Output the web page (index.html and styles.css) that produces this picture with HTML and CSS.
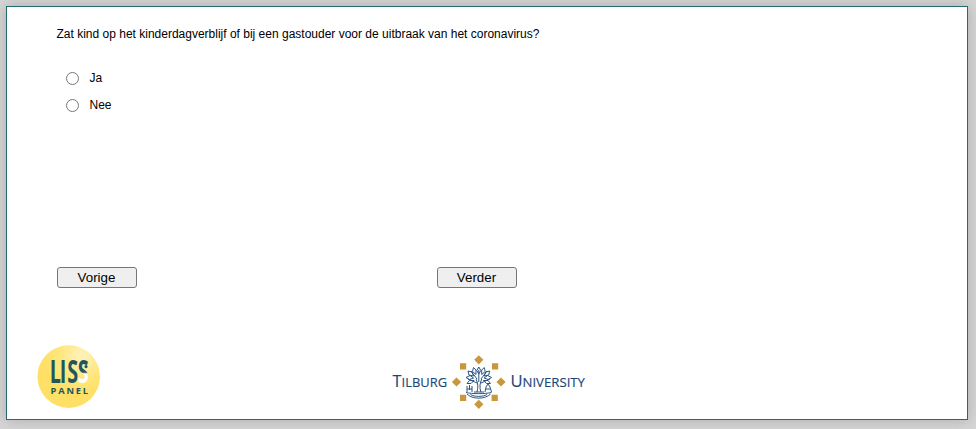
FILE: index.html
```html
<!DOCTYPE html>
<html lang="nl">
<head>
<meta charset="utf-8">
<title>LISS panel</title>
<link rel="stylesheet" href="styles.css">
</head>
<body>
<form class="panel">
  <p class="question">Zat kind op het kinderdagverblijf of bij een gastouder voor de uitbraak van het coronavirus?</p>
  <div class="answers">
    <label class="answer"><input type="radio" name="answer"><span>Ja</span></label>
    <label class="answer"><input type="radio" name="answer"><span>Nee</span></label>
  </div>
  <div class="buttons">
    <button class="button" type="button">Vorige</button>
    <button class="button" type="button">Verder</button>
  </div>
  <div class="logos">
    <svg class="liss" viewBox="0 0 64 64" width="64" height="64">
      <defs>
        <radialGradient id="sun" cx=".7" cy=".18" r=".6">
          <stop offset="0" stop-color="#fff3bd"/>
          <stop offset=".6" stop-color="#ffe67c"/>
          <stop offset="1" stop-color="#ffe067"/>
        </radialGradient>
        <linearGradient id="fade" gradientUnits="userSpaceOnUse" x1="0" y1="26" x2="0" y2="30">
          <stop offset=".3" stop-color="#23565c"/>
          <stop offset=".7" stop-color="#fff"/>
        </linearGradient>
      </defs>
      <circle cx="31.7" cy="31.6" r="31.3" fill="url(#sun)"/>
      <text class="liss-name" y="37.6" transform="translate(12.8 0) scale(.6 1)"><tspan x="0">L</tspan><tspan x="16.5">I</tspan><tspan x="29">S</tspan><tspan x="46.5" fill="url(#fade)">S</tspan></text>
      <circle cx="49" cy="21.6" r="1.6" fill="#23565c"/>
      <text class="liss-sub" x="13.6" y="48.6" textLength="37.5">PANEL</text>
    </svg>
    <svg class="tilburg" viewBox="0 0 196 56" width="196" height="56">
      <g class="word">
        <text x="1.6" y="32.6" textLength="54.5" lengthAdjust="spacingAndGlyphs"><tspan class="cap">T</tspan>ILBURG</text>
        <text x="119.4" y="32.6" textLength="74.6" lengthAdjust="spacingAndGlyphs"><tspan class="cap">U</tspan>NIVERSITY</text>
      </g>
      <g fill="#c9973c">
        <path d="M87.8 1.2l4.6 4.6-4.6 4.6-4.6-4.6zM87.8 45.7l4.6 4.6-4.6 4.6-4.6-4.6zM65.5 23.4l4.6 4.6-4.6 4.6-4.6-4.6zM110 23.4l4.6 4.6-4.6 4.6-4.6-4.6z"/>
        <path d="M69 9.2h6.2v6.2H69zM101 9.2h6.2v6.2H101zM69 40.8h6.2V47H69zM100.6 40.8h6.2V47h-6.2z"/>
      </g>
      <g fill="none" stroke="#2b5583" stroke-width="1">
        <path d="M86 38c1.4-5 1-9-1-13M89.8 38c-1.4-5-1-9 1-13M87.8 28V16M86 29l-9-4M90 29l9-4M86 25l-6-8M90 25l6-8"/>
        <path d="M87.8 13l-2 3.5 2 3.5 2-3.5zM82.5 13.5l-1 4 3.5 3 0-4.5zM93.2 13.5l1 4-3.5 3 0-4.5zM77 17l1 4 4.5 1-1.5-4zM98.7 17l-1 4-4.5 1 1.5-4zM75 23.5l3.5 2 4-1.500-3.500-2.500zM100.600 23.500l-3.500 2-4-1.500 3.500-2.500zM76 29.500l4 0 3-3-4.500 0zM99.500 29.500l-4 0-3-3 4.500 0z"/>
        <path d="M76 38v-6M81 38v-6M76 35h5M78.500 31v5M94 38l1-5 2-3 2 3 1.500 5M95 35h4M83 38h10M75 38.500c6 1.500 19 1.500 25.500 0M76 40c5 5.500 18.500 5.500 23.500 0M79.500 40.500c4 2.500 12.500 2.500 16.500 0"/>
      </g>
    </svg>
  </div>
</form>
</body>
</html>
```
FILE: styles.css
```css
* { box-sizing: border-box; }
body {
  margin: 0;
  padding: 6px 8px 9px 6px;
  background: #d6d6d6;
  font: 12px/14px "Liberation Sans", Arial, sans-serif;
  color: #000;
}
.panel {
  width: 962px;
  height: 414px;
  padding: 20px 49px 0 49.5px;
  border: 1px solid #246b70;
  background: #fff;
  box-shadow: 0 0 14px #aaa;
}
.question { margin: 0; }
.answers {
  display: flex;
  flex-direction: column;
  gap: 13px;
  height: 219px;
  padding: 30px 0 0 9px;
}
.answer { display: flex; align-items: center; height: 14px; }
.answer input { width: 13px; height: 13px; margin: 1px 11px 0 0; }
.buttons { display: flex; gap: 300px; height: 85px; padding-top: 7px; }
.button {
  width: 80px;
  height: 21px;
  padding: 0;
  border: 1px solid #767676;
  border-radius: 3px;
  background: #efefef;
  color: #000;
  font: 13.333px "Liberation Sans", Arial, sans-serif;
}
.logos { display: flex; margin-left: -19.5px; }
.tilburg { margin: 9px 0 0 290px; }
.liss-name { font: bold 33px "Open Sans", sans-serif; fill: #23565c; }
.liss-sub { font: bold 9.3px "Open Sans", sans-serif; fill: #23565c; }
.word { font: 13.5px "Open Sans", sans-serif; fill: #1c477a; stroke: #1c477a; stroke-width: .15px; }
.cap { font-size: 17px; }
```
